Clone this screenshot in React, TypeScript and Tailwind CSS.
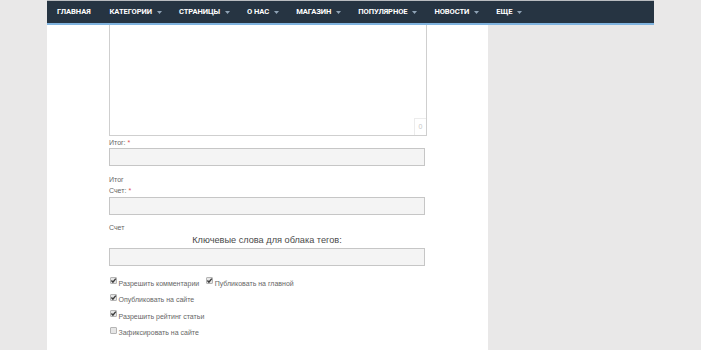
import React from "react";

const navItems: { label: string; caret: boolean }[] = [
  { label: "ГЛАВНАЯ", caret: false },
  { label: "КАТЕГОРИИ", caret: true },
  { label: "СТРАНИЦЫ", caret: true },
  { label: "О НАС", caret: true },
  { label: "МАГАЗИН", caret: true },
  { label: "ПОПУЛЯРНОЕ", caret: true },
  { label: "НОВОСТИ", caret: true },
  { label: "ЕЩЕ", caret: true },
];

function Caret() {
  return (
    <svg width="5" height="3" viewBox="0 0 5 3" className="ml-[5px] mt-[1px]">
      <path d="M0 0 L5 0 L2.5 3 Z" fill="#8fa3b6" />
    </svg>
  );
}

function Check({ checked }: { checked: boolean }) {
  return (
    <span className="relative inline-flex h-[7px] w-[7px] shrink-0 rounded-[1px] border border-[#b5b5b5] bg-[#e6e6e6]">
      {checked && (
        <svg width="7" height="7" viewBox="0 0 7 7" className="absolute left-[-1px] top-[-1px]">
          <path d="M1.4 3.6 L2.9 5.1 L5.8 1.6" stroke="#3a3a3a" strokeWidth="1.4" fill="none" />
        </svg>
      )}
    </span>
  );
}

function Field({ label }: { label: string }) {
  return <span className="text-[7px] leading-none text-[#666]">{label}</span>;
}

export default function App() {
  const font = { fontFamily: '"Liberation Sans", Arial, sans-serif' };
  return (
    <div className="h-[350px] w-[701px] overflow-hidden bg-[#e9e8e8]" style={font}>
      <div className="ml-[47px] w-[607px]">
        <nav className="flex h-[25px] items-start border-t border-[#b9bcc0] bg-[#263442]">
          <div className="flex h-[22px] w-full items-center pl-[10px]" style={{ fontFamily: 'Roboto, "Liberation Sans", sans-serif' }}>
            {navItems.map((it, i) => (
              <div
                key={it.label}
                className={"flex items-center text-[7.6px] font-bold tracking-[-0.1px] text-white " + (i === 0 ? "mr-[19px]" : "mr-[17px]")}
              >
                <span>{it.label}</span>
                {it.caret && <Caret />}
              </div>
            ))}
          </div>
        </nav>
        <div className="-mt-[2px] h-[2px] w-[607px] bg-[#7fb3df]" />
      </div>
      <div className="ml-[47px] h-[325px] w-[441px] bg-white pl-[62px]">
        <div className="relative h-[111px] w-[318px] border-x border-b border-[#cfcfcf] bg-white">
          <div className="absolute bottom-0 right-0 flex h-[17px] w-[12px] items-center justify-center border-l border-t border-[#ececec] text-[7px] text-[#c8c8c8]">
            0
          </div>
        </div>
        <div className="mt-[2px] text-[7px] leading-[10px] text-[#666]">
          Итог: <span className="text-[#e05050]">*</span>
        </div>
        <div className="mt-[0px] h-[18px] w-[316px] border border-[#c6c6c6] bg-[#f4f4f4]" />
        <div className="mt-[9px] text-[7px] leading-[10px] text-[#666]">Итог</div>
        <div className="mt-[1px] text-[7px] leading-[10px] text-[#666]">
          Счет: <span className="text-[#e05050]">*</span>
        </div>
        <div className="mt-[1px] h-[18px] w-[316px] border border-[#c6c6c6] bg-[#f4f4f4]" />
        <div className="mt-[8px] text-[7px] leading-[10px] text-[#666]">Счет</div>
        <div className="mt-[1px] w-[316px] text-center text-[9.2px] font-normal leading-[12px] text-[#4a4a4a]">
          Ключевые слова для облака тегов:
        </div>
        <div className="mt-[2px] h-[18px] w-[316px] border border-[#c6c6c6] bg-[#f4f4f4]" />
        <div className="mt-[11px] flex flex-col gap-[9px] pl-[1px]">
          <div className="flex h-[7.5px] items-center">
            <Check checked />
            <span className="ml-[1.5px] mr-[7px]"><Field label="Разрешить комментарии" /></span>
            <Check checked />
            <span className="ml-[1.5px]"><Field label="Публиковать на главной" /></span>
          </div>
          <div className="flex h-[7.5px] items-center">
            <Check checked />
            <span className="ml-[1.5px]"><Field label="Опубликовать на сайте" /></span>
          </div>
          <div className="flex h-[7.5px] items-center">
            <Check checked />
            <span className="ml-[1.5px]"><Field label="Разрешить рейтинг статьи" /></span>
          </div>
          <div className="flex h-[7.5px] items-center">
            <Check checked={false} />
            <span className="ml-[1.5px]"><Field label="Зафиксировать на сайте" /></span>
          </div>
        </div>
      </div>
    </div>
  );
}
